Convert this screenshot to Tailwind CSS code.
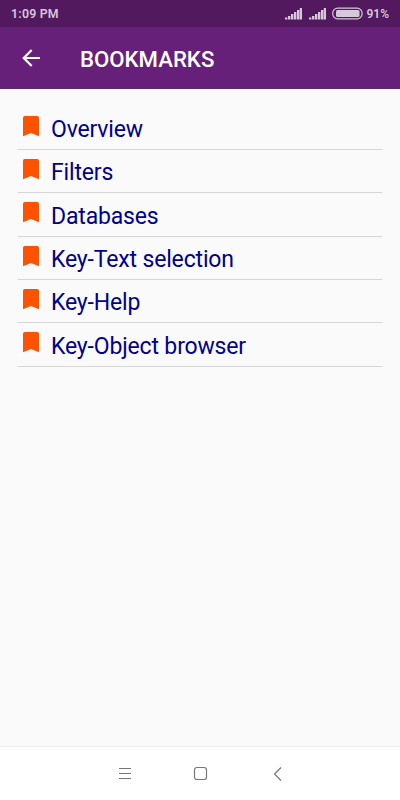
<!DOCTYPE html>
<html lang="en">

<head>
    <meta charset="UTF-8" />
    <meta name="viewport" content="width=device-width, initial-scale=1.0" />
    <title>Bookmarks</title>
    <script src="https://cdn.jsdelivr.net/npm/@tailwindcss/browser@4"></script>
</head>

<body class="bg-[#fafafa] font-[Roboto,sans-serif]">
    <div class="flex flex-col h-[800px] w-[400px] overflow-hidden">
        <!-- Status bar -->
        <div class="flex items-center h-[27px] shrink-0 bg-[#52195e] pl-[11px] pr-[11px] text-[#d6c8da] text-[12.3px] font-semibold">
            <span class="pt-[2px] tracking-[0.25px]">1:09 PM</span>
            <svg class="ml-auto" width="17" height="27" fill="currentColor">
                <path d="M0 17.500h2.400v2h-2.400zM3 16h2.400v3.500h-2.400zM6 14h2.400v5.500h-2.400zM9 12h2.400v7.500h-2.400zM12 10h2.400v9.500h-2.400zM14.800 8h2.200v11.500h-2.200z" />
            </svg>
            <svg class="ml-[7px]" width="17" height="27" fill="currentColor">
                <path d="M0 17.500h2.400v2h-2.400zM3 16h2.400v3.500h-2.400zM6 14h2.400v5.500h-2.400zM9 12h2.400v7.500h-2.400zM12 10h2.400v9.500h-2.400zM14.800 8h2.200v11.500h-2.200z" />
            </svg>
            <svg class="ml-[6px]" width="31" height="27">
                <rect x="0.700" y="8.200" width="29.400" height="10.600" rx="5" fill="none" stroke="currentColor" stroke-width="1.200" />
                <rect x="4" y="10" width="23.500" height="7" rx="1.500" fill="currentColor" />
            </svg>
            <span class="ml-[3px] pt-[1px] text-[12px]">91%</span>
        </div>

        <!-- App bar -->
        <div class="flex items-center h-[62px] shrink-0 bg-[#672079] border-b border-[#5b2b69] pl-[22px] text-white">
            <svg width="18" height="18" fill="none" stroke="currentColor" stroke-width="2.200">
                <path d="M18 9H2M9.700 1L1.700 9L9.700 17" />
            </svg>
            <h1 class="ml-10 pt-[3px] text-[22.2px] font-medium leading-7">BOOKMARKS</h1>
        </div>

        <!-- Bookmark list -->
        <ul id="bookmarks" class="flex-1 px-[18px] pt-[17.700px]"></ul>

        <!-- Navigation bar -->
        <div class="flex items-center h-[54px] shrink-0 bg-white border-t border-[#eeeeee] pl-[118px] text-[#777777]">
            <svg width="14" height="14" fill="none" stroke="currentColor">
                <path d="M1 1.500h12M1 6.500h12M1 11.500h12" />
            </svg>
            <svg class="ml-[61px]" width="15" height="15" fill="none" stroke="currentColor" stroke-width="1.200">
                <rect x="1.500" y="1.500" width="12" height="12" rx="2.500" />
            </svg>
            <svg class="ml-[65px]" width="9" height="14" fill="none" stroke="currentColor" stroke-width="1.200">
                <path d="M8 0.500L1.500 7L8 13.500" />
            </svg>
        </div>
    </div>

    <script>
        const bookmarks = ['Overview', 'Filters', 'Databases', 'Key-Text selection', 'Key-Help', 'Key-Object browser'];
        const list = document.getElementById('bookmarks');

        bookmarks.forEach(title => {
            const item = document.createElement('li');
            item.className = 'flex items-start h-[43.330px] border-b border-[#d6d6d6] pl-[5px]';
            item.innerHTML = `
                <svg class="mt-[9px] shrink-0" width="17" height="21" fill="#ff5200">
                    <path d="M1.700 0H14.300Q16 0 16 1.700V20.300L8 17L0 20.300V1.700Q0 0 1.700 0Z" />
                </svg>
                <span class="ml-[11px] mt-[9.300px] text-[23px] tracking-[-0.160px] leading-7 text-[#00008b]">${title}</span>`;
            list.appendChild(item);
        });
    </script>
</body>

</html>
